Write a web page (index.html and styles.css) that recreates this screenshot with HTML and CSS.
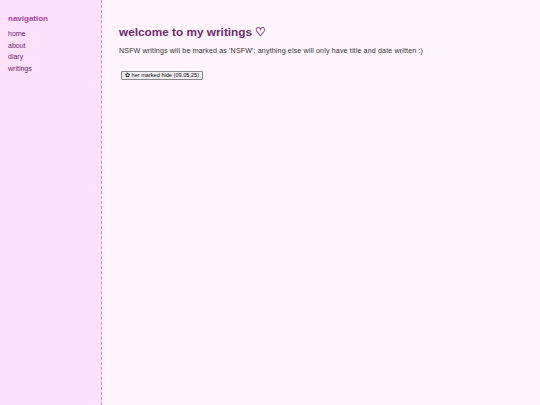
FILE: index.html
```html
<!DOCTYPE html>
<html>
<head>
<meta charset="utf-8">
<link rel="stylesheet" href="styles.css">
</head>
<body>
<div class="layout">
  <nav class="sidebar">
    <h2 class="nav-title">navigation</h2>
    <ul class="nav-list">
      <li><a href="#">home</a></li>
      <li><a href="#">about</a></li>
      <li><a href="#">diary</a></li>
      <li><a href="#">writings</a></li>
    </ul>
  </nav>
  <main class="content">
    <h1 class="title">welcome to my writings ♡</h1>
    <p class="intro">NSFW writings will be marked as 'NSFW'; anything else will only have title and date written :)</p>
    <div class="entries">
      <button class="entry">✿ her marked hide (09.05.25)</button>
    </div>
  </main>
</div>
</body>
</html>
```
FILE: styles.css
```css
html, body {
  margin: 0;
  padding: 0;
  height: 100%;
}
body {
  font-family: "Liberation Sans", Arial, sans-serif;
  background: #fff5fe;
}
.layout {
  display: flex;
  min-height: 405px;
}
.sidebar {
  width: 93px;
  flex: none;
  background: #ffe1fb;
  border-right: 1px dashed #d98ad6;
  padding: 13px 0 0 8px;
  box-sizing: content-box;
}
.nav-title {
  margin: 0 0 4px 0;
  font-size: 8px;
  font-weight: bold;
  color: #a344a3;
  line-height: 11px;
}
.nav-list {
  list-style: none;
  margin: 0;
  padding: 0;
}
.nav-list li {
  font-size: 7px;
  line-height: 11.6px;
}
.nav-list a {
  color: #6b1f6b;
  text-decoration: none;
}
.content {
  flex: 1;
  padding: 24px 0 0 17px;
}
.title {
  margin: 0;
  font-size: 11.8px;
  line-height: 16px;
  font-weight: bold;
  color: #6e2c6e;
}
.intro {
  margin: 7px 0 0 0;
  font-size: 7.1px;
  letter-spacing: 0.14px;
  line-height: 9px;
  color: #333;
}
.entries {
  margin-top: 7px;
  padding-left: 2px;
}
.entry {
  font-family: "Liberation Sans", Arial, sans-serif;
  font-size: 5.6px;
  line-height: 7px;
  padding: 0 3px;
  margin: 0;
  background: #f0eef0;
  border: 1px solid #8a8a8a;
  border-radius: 1px;
  color: #111;
}
```
